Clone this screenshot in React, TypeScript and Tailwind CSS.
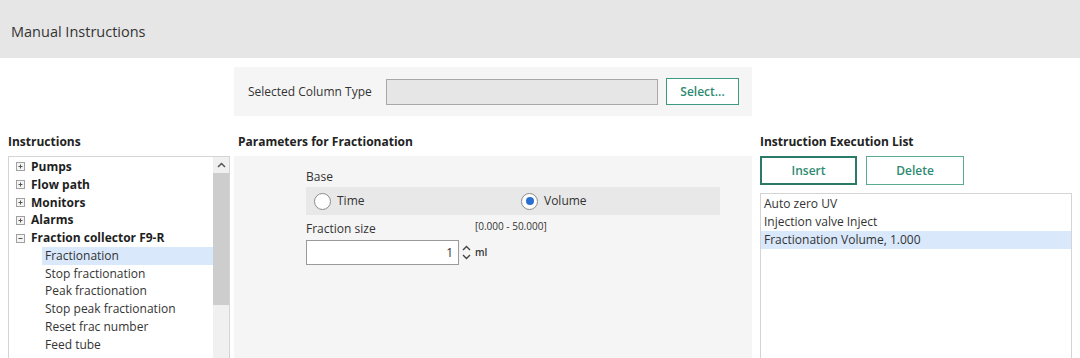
import React from 'react';

const font = { fontFamily: '"Open Sans", "Noto Sans", sans-serif' };

const Expander = ({ open }: { open?: boolean }) => (
  <span className="inline-flex items-center justify-center w-[9px] h-[9px] border border-[#a0a0a0] bg-[#f4f4f4] mr-[6px]">
    <svg width="7" height="7" viewBox="0 0 7 7">
      <path d="M1.5 3.5h4" stroke="#555" strokeWidth="1" />
      {!open && <path d="M3.5 1.5v4" stroke="#555" strokeWidth="1" />}
    </svg>
  </span>
);

const groups = ['Pumps', 'Flow path', 'Monitors', 'Alarms'];
const subItems = ['Fractionation', 'Stop fractionation', 'Peak fractionation', 'Stop peak fractionation', 'Reset frac number', 'Feed tube'];
const execList = ['Auto zero UV', 'Injection valve Inject', 'Fractionation Volume, 1.000'];

const Radio = ({ checked, label }: { checked?: boolean; label: string }) => (
  <div className="flex items-center">
    <span className="w-[17px] h-[17px] rounded-full border border-[#8a8a8a] bg-white flex items-center justify-center">
      {checked && <span className="w-[8px] h-[8px] rounded-full bg-[#2a6fd0]" />}
    </span>
    <span className="ml-[6px] text-[12px] text-[#333]">{label}</span>
  </div>
);

export default function App() {
  return (
    <div className="w-[1080px] h-[358px] overflow-hidden bg-white text-[#333]" style={font}>
      <div className="h-[58px] bg-[#e6e6e6] flex items-center pl-[11px] pt-[6px] text-[14.5px] text-[#333]">
        Manual Instructions
      </div>

      <div className="pt-[9px]">
        <div className="ml-[234px] w-[518px] h-[49px] bg-[#f5f5f5] flex items-center pl-[14px]">
          <span className="text-[12px] w-[126px]">Selected Column Type</span>
          <div className="ml-[12px] w-[272px] h-[26px] bg-[#e6e6e6] border border-[#a8a8a8]" />
          <button className="ml-[8px] w-[73px] h-[27px] border border-[#3d9a82] bg-white text-[12px] font-semibold text-[#2e8a72]">
            Select...
          </button>
        </div>
      </div>

      <div className="flex pl-[8px] mt-[18px]">
        {/* Instructions */}
        <div className="w-[222px] flex flex-col">
          <div className="text-[12px] font-bold text-[#222] leading-[16px] mb-[6px]">Instructions</div>
          <div className="h-[230px] border border-[#d4d4d4] flex">
            <div className="flex-1 pt-[1px] text-[12px]">
              {groups.map((g) => (
                <div key={g} className="h-[17.8px] flex items-center pl-[7px] font-bold text-[#1e1e1e]">
                  <Expander />
                  {g}
                </div>
              ))}
              <div className="h-[17.8px] flex items-center pl-[7px] font-bold text-[#1e1e1e]">
                <Expander open />
                Fraction collector F9-R
              </div>
              {subItems.map((s, i) => (
                <div
                  key={s}
                  className={`h-[17.8px] flex items-center ml-[33px] pl-[3px] ${i === 0 ? 'bg-[#d9e8fb]' : ''}`}
                >
                  {s}
                </div>
              ))}
            </div>
            <div className="w-[16px] bg-[#f0f0f0] flex flex-col">
              <div className="h-[16px] flex items-center justify-center">
                <svg width="9" height="6" viewBox="0 0 9 6">
                  <path d="M1 5l3.5-3.5L8 5" fill="none" stroke="#555" strokeWidth="1.5" />
                </svg>
              </div>
              <div className="h-[132px] bg-[#cdcdcd]" />
            </div>
          </div>
        </div>

        {/* Parameters */}
        <div className="ml-[4px] w-[518px] flex flex-col">
          <div className="pl-[4px] text-[12px] font-bold text-[#222] leading-[16px] mb-[6px]">Parameters for Fractionation</div>
          <div className="h-[230px] bg-[#f5f5f5] pl-[72px] pt-[13px]">
            <div className="text-[12px] leading-[16px]">Base</div>
            <div className="mt-[2px] w-[414px] h-[28px] bg-[#e8e8e8] flex items-center pl-[8px]">
              <div className="w-[207px]">
                <Radio label="Time" />
              </div>
              <Radio checked label="Volume" />
            </div>
            <div className="mt-[6px] flex items-start">
              <div className="w-[169px] text-[12px] leading-[16px]">Fraction size</div>
              <div className="text-[10px] leading-[14px] -mt-[2px]">[0.000 - 50.000]</div>
            </div>
            <div className="mt-[3px] flex items-center">
              <div className="w-[153px] h-[25px] bg-white border border-[#9a9a9a] flex items-center justify-end pr-[5px] text-[12px]">
                1
              </div>
              <div className="ml-[3px] flex flex-col items-center gap-[3px]">
                <svg width="9" height="6" viewBox="0 0 9 6">
                  <path d="M1 5l3.5-3.5L8 5" fill="none" stroke="#444" strokeWidth="1.4" />
                </svg>
                <svg width="9" height="6" viewBox="0 0 9 6">
                  <path d="M1 1l3.5 3.5L8 1" fill="none" stroke="#444" strokeWidth="1.4" />
                </svg>
              </div>
              <span className="ml-[4px] text-[10px] font-semibold">ml</span>
            </div>
          </div>
        </div>

        {/* Execution list */}
        <div className="ml-[8px] w-[312px] flex flex-col">
          <div className="text-[12px] font-bold text-[#222] leading-[16px] mb-[6px]">Instruction Execution List</div>
          <div className="flex">
            <button className="w-[97px] h-[29px] border-2 border-[#2b7a68] bg-white text-[12px] font-semibold text-[#2e8a72]">
              Insert
            </button>
            <button className="ml-[9px] w-[98px] h-[29px] border border-[#5aab93] bg-white text-[12px] font-semibold text-[#2e8a72]">
              Delete
            </button>
          </div>
          <div className="mt-[8px] h-[230px] border border-[#d4d4d4] pt-[1px] text-[12px]">
            {execList.map((e, i) => (
              <div key={e} className={`h-[18px] flex items-center pl-[3px] ${i === 2 ? 'bg-[#d9e8fb]' : ''}`}>
                {e}
              </div>
            ))}
          </div>
        </div>
      </div>
    </div>
  );
}
